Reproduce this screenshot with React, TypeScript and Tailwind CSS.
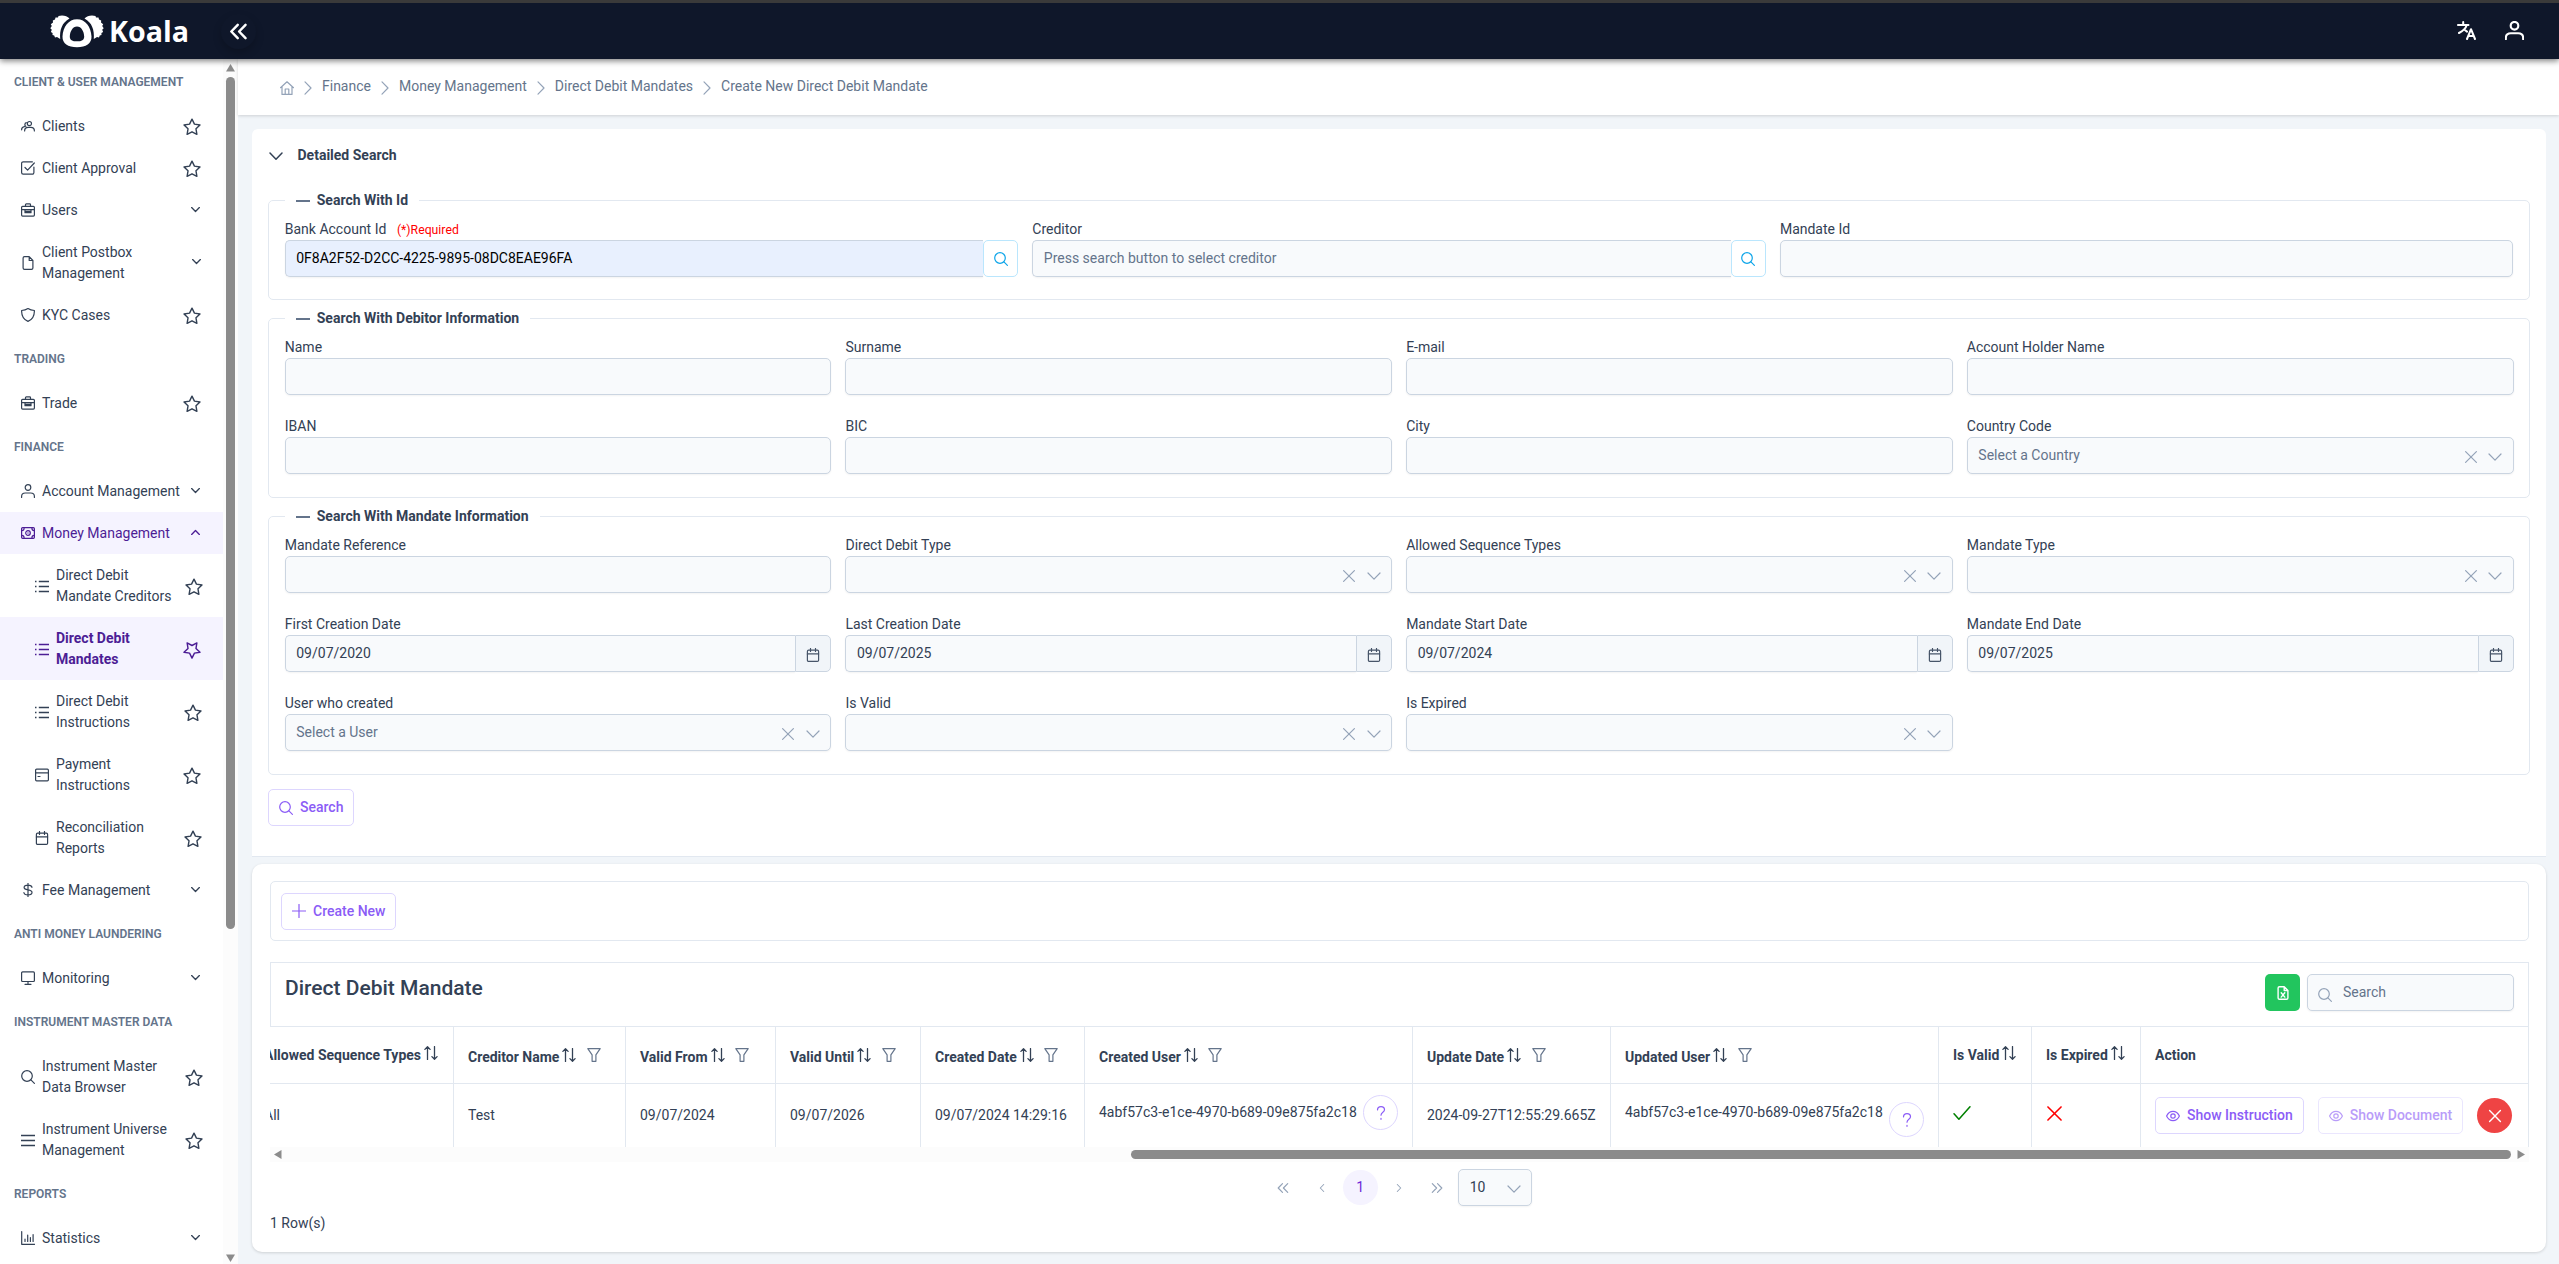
import { ReactNode } from 'react';

const iconPaths: Record<string, ReactNode> = {
  users: (
    <>
      <circle cx="8.4" cy="4.6" r="2.1" />
      <path d="M3.6 12c0-2.6 1.6-3.6 3.6-3.6h2.6c2.200 0 3.600 1 3.600 3.600M4.900 7.300C3.400 7 3.500 4 5.300 3.600M.6 10.800c0-2 1-3 2.800-3.200" />
    </>
  ),
  check: <path d="M12.9 6v5.600a1.600 1.600 0 0 1-1.600 1.600H2.200A1.600 1.600 0 0 1 .6 11.600V2.400A1.600 1.600 0 0 1 2.200.8h9.200M4 6.500l2.600 2.600L13.300 2" />,
  briefcase: (
    <>
      <rect x=".6" y="3.300" width="12.800" height="9.800" rx="1" />
      <path d="M4.500 3.200V1.700c0-.5.3-.8.8-.8h3.400c.5 0 .8.3.8.8v1.500M.6 6.600h12.800M4 7v2.700h6V7M4 8.400h6" />
    </>
  ),
  file: <path d="M8.200.7H3.500c-.8 0-1.400.6-1.400 1.400v9.800c0 .8.6 1.400 1.400 1.400h7c.8 0 1.400-.6 1.400-1.400V4.500L8.200.7zm0 0v3.800h3.700" />,
  shield: <path d="M7 .6c2 1.300 4 1.800 6.400 1.900C13.500 7.500 12 11.400 7 13.400 2 11.400.5 7.500.6 2.500 3 2.400 5 1.900 7 .6z" />,
  user: (
    <>
      <circle cx="7" cy="3.500" r="2.800" />
      <path d="M.6 13.400v-1C.6 10.200 2.300 9 4.300 9h5.400c2 0 3.700 1.200 3.700 3.400v1" />
    </>
  ),
  money: (
    <>
      <rect x=".6" y="1.700" width="12.800" height="10.600" rx="1" />
      <circle cx="7" cy="7" r="2.300" />
      <path d="M.8 4.600c1.500 0 2.300-.8 2.300-2.600M13.200 4.600c-1.500 0-2.300-.8-2.300-2.600M.8 9.400c1.500 0 2.300.8 2.300 2.600M13.200 9.400c-1.500 0-2.300.8-2.300 2.600M7 6.900v.2" />
    </>
  ),
  list: <path d="M3.800 2.500H14M3.800 7.500H14M3.800 12.500H14M0 2.500h1.500M0 7.500h1.500M0 12.500h1.500" strokeLinecap="butt" strokeWidth="1.400" />,
  card: (
    <>
      <rect x=".6" y="1.200" width="12.800" height="11.600" rx="1" />
      <path d="M.6 4.800h12.800M3 8.500h2" />
    </>
  ),
  calendar: (
    <>
      <rect x="1.400" y="2.200" width="11.200" height="11.200" rx="1.200" />
      <path d="M1.400 5.900h11.200M4.500.5v3M9.500.5v3" />
    </>
  ),
  dollar: <path d="M11 4.300C10.700 2.800 9.300 2.100 7 2.100c-2.400 0-3.900.8-3.900 2.400C3.100 8 11 5.900 11 9.500c0 1.600-1.500 2.400-4 2.400-2.400 0-3.900-.8-4.100-2.400M7 .2v13.600" />,
  desktop: (
    <>
      <rect x=".6" y=".9" width="12.800" height="9.600" rx="1" />
      <path d="M7 10.500v2.700M4 13.300h6" />
    </>
  ),
  search: (
    <>
      <circle cx="6" cy="6" r="5.300" />
      <path d="M9.900 9.900l3.500 3.500" />
    </>
  ),
  bars: <path d="M.2 2.500h13.600M.2 7.500h13.600M.2 12.500h13.600" strokeWidth="1.400" />,
  chart: <path d="M.7.6v12.700h12.900M4 10.500V8M6.700 10.500V4M9.400 10.500V6.500M12.100 10.500V3.500" />,
  star: <path d="M7 .9l1.900 3.900 4.300.6-3.100 3 .7 4.300L7 10.700l-3.800 2 .7-4.300-3.100-3 4.300-.6L7 .9z" />,
  starAlt: <path d="M7 13.300l-1.900-3.900-4.300-.6 3.100-3-.7-4.300L7 3.500l3.800-2-.7 4.300 3.100 3-4.300.6L7 13.300z" />,
  down: <path d="M1 4l6 6.200L13 4" />,
  up: <path d="M1 10l6-6.200L13 10" />,
  right: <path d="M4 .9l6 6.100-6 6.100" />,
  left: <path d="M10 .9L4 7l6 6.100" />,
  first: <path d="M6.500 2.600L2.200 7l4.300 4.400M11.700 2.600L7.400 7l4.300 4.400" />,
  last: <path d="M7.500 2.600L11.800 7l-4.300 4.400M2.300 2.600L6.600 7l-4.300 4.400" />,
  times: <path d="M1.600 1.600l10.800 10.800M12.400 1.600L1.600 12.400" />,
  tick: <path d="M.8 7.600l3.800 4.200L13.200 2.200" />,
  home: <path d="M.5 6.700L7 .8l6.500 5.900M2 5.600v7.800h10V5.600M5.200 13.200V8h3.600v5.200" />,
  minus: <path d="M.2 7h13.600" />,
  plus: <path d="M7 .4v13.200M.4 7h13.200" />,
  sort: <path d="M3.500 13.400V.8M.9 3.400L3.500.7l2.600 2.700M10.500.6v12.600M7.900 10.600l2.600 2.700 2.600-2.700" />,
  filter: <path d="M.8.700h12.400L8.900 6.800v6.500H5.100V6.800L.8.700z" />,
  eye: (
    <>
      <path d="M.6 7C2 4 4.300 2.300 7 2.300S12 4 13.400 7C12 10 9.700 11.700 7 11.700S2 10 .6 7z" />
      <circle cx="7" cy="7" r="2.200" />
    </>
  ),
  question: <path d="M3.500 3.900C3.600 1.900 5 .7 7 .7s3.500 1.200 3.500 3.100C10.500 6.300 7 6.300 7 9.200M7 12.300v1" />,
  excel: (
    <>
      <path d="M8.200.7H3.500c-.8 0-1.400.6-1.400 1.400v9.800c0 .8.6 1.400 1.400 1.400h7c.8 0 1.400-.6 1.400-1.400V4.500L8.200.7zm0 0v3.800h3.700" />
      <path d="M5.200 6.700l3.600 4.400M8.800 6.700l-3.600 4.400" />
    </>
  ),
};

type IconProps = { name: string; size?: number; stroke?: number; className?: string };

const Icon = ({ name, size = 14, stroke = 1.2, className = '' }: IconProps) => (
  <svg
    xmlns="http://www.w3.org/2000/svg"
    width={size}
    height={size}
    viewBox="0 0 14 14"
    fill="none"
    stroke="currentColor"
    strokeWidth={stroke}
    strokeLinecap="round"
    strokeLinejoin="round"
    className={`shrink-0 ${className}`}
  >
    {iconPaths[name]}
  </svg>
);

const Logo = () => (
  <svg width="140" height="36" viewBox="0 0 140 36" className="shrink-0 overflow-visible">
    <g fill="#fff">
      <path d="M19.500 5.500C17 2.500 12 1.800 8.500 3L8 4.500 5.500 4.500 5 6.500 2.800 7.500 3 9.500.8 11.200 1.800 13 .3 15.300 1.800 16.800.9 19 2.600 20 2.500 22 4.200 22.600 5 24.500 7 24 10.200 26C9.500 17 12 9.500 19.500 5.500z" />
      <path d="M34.500 5.500C37 2.500 42 1.800 45.500 3L46 4.500 48.500 4.500 49 6.500 51.200 7.500 51 9.500 53.200 11.200 52.200 13 53.700 15.300 52.200 16.800 53.100 19 51.400 20 51.500 22 49.800 22.600 49 24.500 47 24 43.800 26C44.500 17 42 9.500 34.500 5.500z" />
      <path
        fillRule="evenodd"
        d="M27 6.200c8.500 0 14 7.500 14.500 17.300C41.800 30.500 36 34.200 27 34.200s-14.800-3.700-14.500-10.700C13 13.700 18.500 6.200 27 6.200zm0 7.200c-4.400 0-7 5-7.200 10 0 3.600 2.600 4.900 7.200 4.900s7.200-1.300 7.200-4.900c-.2-5-2.800-10-7.200-10z"
      />
    </g>
    <text x="59" y="28.500" fill="#fff" fontFamily="'Open Sans', sans-serif" fontSize="28" fontWeight="700" textLength="80" lengthAdjust="spacingAndGlyphs">
      Koala
    </text>
  </svg>
);

type MenuItem = {
  icon: string;
  lines: string[];
  end: 'star' | 'starAlt' | 'down' | 'up';
  sub?: boolean;
  state?: 'open' | 'active';
  margin?: string;
};

const menu: { title: string; items: MenuItem[] }[] = [
  {
    title: 'CLIENT & USER MANAGEMENT',
    items: [
      { icon: 'users', lines: ['Clients'], end: 'star' },
      { icon: 'check', lines: ['Client Approval'], end: 'star' },
      { icon: 'briefcase', lines: ['Users'], end: 'down' },
      { icon: 'file', lines: ['Client Postbox', 'Management'], end: 'down', margin: 'mr-[22px]' },
      { icon: 'shield', lines: ['KYC Cases'], end: 'star' },
    ],
  },
  { title: 'TRADING', items: [{ icon: 'briefcase', lines: ['Trade'], end: 'star' }] },
  {
    title: 'FINANCE',
    items: [
      { icon: 'user', lines: ['Account Management'], end: 'down' },
      { icon: 'money', lines: ['Money Management'], end: 'up', state: 'open' },
      { icon: 'list', lines: ['Direct Debit', 'Mandate Creditors'], end: 'star', sub: true, margin: 'mr-[20px]' },
      { icon: 'list', lines: ['Direct Debit', 'Mandates'], end: 'starAlt', sub: true, state: 'active' },
      { icon: 'list', lines: ['Direct Debit', 'Instructions'], end: 'star', sub: true, margin: 'mr-[21px]' },
      { icon: 'card', lines: ['Payment', 'Instructions'], end: 'star', sub: true },
      { icon: 'calendar', lines: ['Reconciliation', 'Reports'], end: 'star', sub: true, margin: 'mr-[21px]' },
      { icon: 'dollar', lines: ['Fee Management'], end: 'down' },
    ],
  },
  { title: 'ANTI MONEY LAUNDERING', items: [{ icon: 'desktop', lines: ['Monitoring'], end: 'down' }] },
  {
    title: 'INSTRUMENT MASTER DATA',
    items: [
      { icon: 'search', lines: ['Instrument Master', 'Data Browser'], end: 'star', margin: 'mr-[20px]' },
      { icon: 'bars', lines: ['Instrument Universe', 'Management'], end: 'star', margin: 'mr-[20px]' },
    ],
  },
  { title: 'REPORTS', items: [{ icon: 'chart', lines: ['Statistics'], end: 'down' }] },
];

const SidebarItem = ({ icon, lines, end, sub, state, margin }: MenuItem) => {
  const isStar = end === 'star' || end === 'starAlt';
  const endMargin = margin ?? (isStar ? 'mr-[22px]' : 'mr-[23px]');
  return (
    <div
      className={`flex items-center gap-[7px] py-[10.5px] ${sub ? 'pl-[35px]' : 'pl-[21px]'} ${
        state ? 'bg-[#f5f3ff] text-[#4c1d95]' : 'text-[#334155]'
      }`}
    >
      <Icon name={icon} />
      <span className={state === 'active' ? 'font-bold' : ''}>
        {lines.map((line) => (
          <span key={line} className="block whitespace-nowrap">
            {line}
          </span>
        ))}
      </span>
      <Icon
        name={end}
        size={isStar ? 18 : 9}
        stroke={isStar ? 1.1 : 2}
        className={`relative ml-auto ${isStar ? 'top-px' : '-top-px'} ${endMargin}`}
      />
    </div>
  );
};

const Sidebar = () => (
  <aside className="flex w-[238px] shrink-0 overflow-hidden bg-white">
    <div className="w-[223px] shrink-0">
      {menu.map((group) => (
        <div key={group.title}>
          <div className="flex h-[46px] items-center pl-[14px] text-[12px] font-semibold whitespace-nowrap text-[#64748b]">
            {group.title}
          </div>
          {group.items.map((item) => (
            <SidebarItem key={item.lines.join(' ')} {...item} />
          ))}
        </div>
      ))}
    </div>
    <div className="flex h-[1205px] w-[15px] flex-col items-center bg-[#fcfcfc] pt-[5px] pb-[2px]">
      <svg width="9" height="8" viewBox="0 0 9 8" fill="#8b8b8b">
        <path d="M4.500 0L9 7.500H0z" />
      </svg>
      <div className="mt-[5px] h-[852px] w-[9px] rounded-full bg-[#8b8b8b]" />
      <svg width="9" height="8" viewBox="0 0 9 8" fill="#8b8b8b" className="mt-auto">
        <path d="M4.500 8L9 .5H0z" />
      </svg>
    </div>
  </aside>
);

const Breadcrumb = () => {
  const items = ['Finance', 'Money Management', 'Direct Debit Mandates', 'Create New Direct Debit Mandate'];
  return (
    <div className="flex h-[56px] items-center bg-white pb-px pl-[42px] text-[#64748b] shadow-[0_1px_3px_rgba(0,0,0,0.15)]">
      <Icon name="home" className="relative top-px text-[#94a3b8]" />
      {items.map((item) => (
        <div key={item} className="flex items-center">
          <Icon name="right" className="relative top-px mx-[7px] text-[#94a3b8]" />
          <span>{item}</span>
        </div>
      ))}
    </div>
  );
};

type FieldProps = {
  label: string;
  kind?: 'text' | 'select' | 'date' | 'lookup';
  value?: string;
  placeholder?: string;
  required?: boolean;
  autofill?: boolean;
};

const Field = ({ label, kind = 'text', value, placeholder, required, autofill }: FieldProps) => {
  const joined = kind === 'date' || kind === 'lookup';
  return (
    <div className="min-w-0">
      <div className="flex h-[21px] items-center">
        {label}
        {required && <span className="ml-[10.500px] pt-px text-[12.250px] text-[#ff0000]">(*)Required</span>}
      </div>
      <div className="flex h-[37px]">
        <div
          className={`flex min-w-0 flex-1 items-center border border-[#cbd5e1] px-[10.5px] shadow-[0_1px_2px_rgba(18,18,23,0.05)] ${
            joined ? 'rounded-l-[5px] border-r-0' : 'rounded-[5px]'
          } ${autofill ? 'bg-[#e8f0fe] text-black' : 'bg-[#f8fafc]'}`}
        >
          {value && <span>{value}</span>}
          {placeholder && <span className="text-[#64748b]">{placeholder}</span>}
          {kind === 'select' && (
            <div className="ml-auto flex gap-[10.500px] pt-[2px] text-[#94a3b8]">
              <Icon name="times" />
              <Icon name="down" />
            </div>
          )}
        </div>
        {kind === 'date' && (
          <div className="flex w-[36px] items-center justify-center rounded-r-[5px] border border-[#cbd5e1] bg-[#f1f5f9] pt-[2px] text-[#475569]">
            <Icon name="calendar" />
          </div>
        )}
        {kind === 'lookup' && (
          <div className="flex w-[35px] items-center justify-center rounded-[5px] border border-[#bae6fd] text-[#0ea5e9]">
            <Icon name="search" />
          </div>
        )}
      </div>
    </div>
  );
};

const Fieldset = ({ title, wide, className, children }: { title: string; wide?: boolean; className: string; children: ReactNode }) => (
  <fieldset className={`mx-[-0.5px] min-w-0 rounded-[5px] border border-[#e2e8f0] pr-[15.500px] pl-[15.750px] ${className}`}>
    <legend className="flex h-[21px] items-center px-[11px] font-bold">
      <Icon name="minus" stroke={2} className="mr-[7px] text-[#64748b]" />
      {title}
    </legend>
    <div className={`grid gap-x-[14px] gap-y-[21px] pt-[8px] ${wide ? 'grid-cols-4' : 'grid-cols-3'}`}>{children}</div>
  </fieldset>
);

const OutlineButton = ({ icon, label, className = '' }: { icon: string; label: string; className?: string }) => (
  <button className={`flex h-[37px] items-center gap-[7px] rounded-[5px] border border-[#ddd6fe] px-[10px] font-medium whitespace-nowrap text-[#8b5cf6] ${className}`}>
    <Icon name={icon} />
    {label}
  </button>
);

const SearchPanel = () => (
  <section className="h-[728px] rounded-t-[6px] border-b border-[#e2e8f0] bg-white px-[16.500px] pt-[16px]">
    <div className="flex h-[21px] items-center font-bold">
      <Icon name="down" stroke={1.500} className="mr-[15px]" />
      Detailed Search
    </div>
    <Fieldset title="Search With Id" className="mt-[24px] h-[110px]">
      <Field label="Bank Account Id" kind="lookup" value="0F8A2F52-D2CC-4225-9895-08DC8EAE96FA" required autofill />
      <Field label="Creditor" kind="lookup" placeholder="Press search button to select creditor" />
      <Field label="Mandate Id" />
    </Fieldset>
    <Fieldset title="Search With Debitor Information" wide className="mt-[8px] h-[190px]">
      <Field label="Name" />
      <Field label="Surname" />
      <Field label="E-mail" />
      <Field label="Account Holder Name" />
      <Field label="IBAN" />
      <Field label="BIC" />
      <Field label="City" />
      <Field label="Country Code" kind="select" placeholder="Select a Country" />
    </Fieldset>
    <Fieldset title="Search With Mandate Information" wide className="mt-[8px] h-[269px]">
      <Field label="Mandate Reference" />
      <Field label="Direct Debit Type" kind="select" />
      <Field label="Allowed Sequence Types" kind="select" />
      <Field label="Mandate Type" kind="select" />
      <Field label="First Creation Date" kind="date" value="09/07/2020" />
      <Field label="Last Creation Date" kind="date" value="09/07/2025" />
      <Field label="Mandate Start Date" kind="date" value="09/07/2024" />
      <Field label="Mandate End Date" kind="date" value="09/07/2025" />
      <Field label="User who created" kind="select" placeholder="Select a User" />
      <Field label="Is Valid" kind="select" />
      <Field label="Is Expired" kind="select" />
    </Fieldset>
    <OutlineButton icon="search" label="Search" className="mt-[14px] -ml-[0.500px]" />
  </section>
);

const HelpButton = ({ className = '' }: { className?: string }) => (
  <span className={`flex size-[35px] shrink-0 items-center justify-center rounded-full border border-[#ddd6fe] text-[#8b5cf6] ${className}`}>
    <Icon name="question" />
  </span>
);

const userId = '4abf57c3-e1ce-4970-b689-09e875fa2c18';

const columns: { title: string; width: string; sort?: boolean; filter?: boolean; cell: ReactNode }[] = [
  { title: 'Allowed Sequence Types', width: 'w-[204px]', sort: true, cell: 'All' },
  { title: 'Creditor Name', width: 'w-[172px]', sort: true, filter: true, cell: 'Test' },
  { title: 'Valid From', width: 'w-[150px]', sort: true, filter: true, cell: '09/07/2024' },
  { title: 'Valid Until', width: 'w-[145px]', sort: true, filter: true, cell: '09/07/2026' },
  { title: 'Created Date', width: 'w-[164px]', sort: true, filter: true, cell: '09/07/2024 14:29:16' },
  {
    title: 'Created User',
    width: 'w-[328px]',
    sort: true,
    filter: true,
    cell: (
      <div className="flex items-center gap-[6.500px] pb-[6px]">
        {userId}
        <HelpButton />
      </div>
    ),
  },
  { title: 'Update Date', width: 'w-[198px]', sort: true, filter: true, cell: '2024-09-27T12:55:29.665Z' },
  {
    title: 'Updated User',
    width: 'w-[328px]',
    sort: true,
    filter: true,
    cell: (
      <div className="flex items-center gap-[6.500px] pb-[6px]">
        {userId}
        <HelpButton className="relative top-[7px]" />
      </div>
    ),
  },
  { title: 'Is Valid', width: 'w-[93px]', sort: true, cell: <Icon name="tick" size={18} className="mb-[5px] text-[#008000]" /> },
  { title: 'Is Expired', width: 'w-[109px]', sort: true, cell: <Icon name="times" size={17} className="mb-[5px] text-[#ff0000]" stroke={1.300} /> },
  {
    title: 'Action',
    width: 'w-[388px]',
    cell: (
      <div className="flex items-center gap-[14px]">
        <OutlineButton icon="eye" label="Show Instruction" />
        <OutlineButton icon="eye" label="Show Document" className="opacity-60" />
        <span className="flex size-[35px] items-center justify-center rounded-full bg-[#ef4444] text-white">
          <Icon name="times" stroke={1.400} />
        </span>
      </div>
    ),
  },
];

const MandateTable = () => (
  <div className="mt-[21px]">
    <div className="flex h-[65px] items-start border border-[#e2e8f0] px-[14px] pt-[11px]">
      <h2 className="text-[21px] leading-[28px] font-medium">Direct Debit Mandate</h2>
      <button className="mr-[7px] ml-auto flex h-[37px] w-[35px] items-center justify-center rounded-[5px] bg-[#22c55e] text-white">
        <Icon name="excel" stroke={1.400} />
      </button>
      <div className="flex h-[37px] w-[207px] items-center gap-[11px] rounded-[5px] border border-[#cbd5e1] bg-[#f8fafc] px-[10px] text-[#64748b] shadow-[0_1px_2px_rgba(18,18,23,0.05)]">
        <Icon name="search" className="relative top-[2px] text-[#94a3b8]" />
        <span>Search</span>
      </div>
    </div>
    <div className="flex justify-end overflow-hidden">
      {columns.map((column) => (
        <div key={column.title} className={`shrink-0 border-r border-[#e2e8f0] whitespace-nowrap ${column.width}`}>
          <div className="flex h-[57px] items-center border-b border-[#e2e8f0] pl-[14px] font-bold">
            <span className={column.filter ? 'pt-[5px]' : ''}>{column.title}</span>
            {column.sort && <Icon name="sort" stroke={1.300} className={column.filter ? 'ml-[3px]' : 'relative -top-[2px] ml-[3px]'} />}
            {column.filter && <Icon name="filter" className="ml-[10.500px] text-[#64748b]" />}
          </div>
          <div className="flex h-[63px] items-center pl-[14px]">{column.cell}</div>
        </div>
      ))}
    </div>
    <div className="flex h-[15px] items-center bg-[#fcfcfc] pr-[4px] pl-[4px]">
      <svg width="8" height="9" viewBox="0 0 8 9" fill="#8b8b8b">
        <path d="M0 4.500L7.500 0v9z" />
      </svg>
      <div className="ml-auto h-[9px] w-[1380px] rounded-full bg-[#8b8b8b]" />
      <svg width="8" height="9" viewBox="0 0 8 9" fill="#8b8b8b" className="ml-[6px]">
        <path d="M8 4.500L.5 0v9z" />
      </svg>
    </div>
  </div>
);

const Paginator = () => (
  <div className="mt-[7px] flex h-[37px] items-center justify-center gap-[3.500px] pr-px text-[#94a3b8]">
    <span className="flex size-[35px] items-center justify-center">
      <Icon name="first" />
    </span>
    <span className="flex size-[35px] items-center justify-center">
      <Icon name="left" size={8} stroke={1.800} />
    </span>
    <span className="flex size-[35px] items-center justify-center rounded-full bg-[#f5f3ff] text-[#6d28d9]">1</span>
    <span className="flex size-[35px] items-center justify-center">
      <Icon name="right" size={8} stroke={1.800} />
    </span>
    <span className="flex size-[35px] items-center justify-center">
      <Icon name="last" />
    </span>
    <div className="flex h-[37px] w-[74px] items-center justify-between rounded-[5px] border border-[#cbd5e1] bg-[#f8fafc] px-[10.500px] shadow-[0_1px_2px_rgba(18,18,23,0.05)]">
      <span className="text-[#334155]">10</span>
      <Icon name="down" className="relative top-px" />
    </div>
  </div>
);

export default function App() {
  return (
    <div className="flex h-[1264px] w-[2559px] flex-col overflow-hidden bg-[#f1f5f9] font-[Roboto,sans-serif] text-[14px] leading-[21px] text-[#334155]">
      <header className="relative z-10 flex h-[59px] shrink-0 items-center border-t-3 border-[#3a3a3a] bg-[#0f172a] pl-[50px] text-white shadow-[0_2px_6px_rgba(0,0,0,0.5)]">
        <Logo />
        <div className="ml-[31px] flex size-[35px] items-center justify-center rounded-full shadow-[0_4px_8px_rgba(0,0,0,0.2)]">
          <Icon name="first" size={21} stroke={1.650} />
        </div>
        <div className="ml-auto flex items-center gap-[29px] pr-[35px] pb-px">
          <svg width="19" height="19" viewBox="0 0 19 19" fill="none" stroke="currentColor" strokeWidth="2" strokeLinecap="round" strokeLinejoin="round">
            <path d="M.9 4h10.600M6.200 1v3M9.800 4c-1 3.500-4 6-7.800 8M7.500 8.800l2.500 1.800M10 18l4-9.800L18 18M11.400 15h5.200" />
          </svg>
          <Icon name="user" size={19} stroke={1.600} />
        </div>
      </header>
      <div className="flex min-h-0 flex-1">
        <Sidebar />
        <main className="min-w-0 flex-1">
          <Breadcrumb />
          <div className="pt-[14px] pr-[13px] pl-[14px]">
            <SearchPanel />
            <section className="mt-[7px] h-[388px] rounded-[10px] bg-white pt-[17px] pr-[17px] pl-[18px] shadow-[0_1px_3px_rgba(0,0,0,0.15)]">
              <div className="flex h-[60px] items-center rounded-[5px] border border-[#e2e8f0] px-[10px]">
                <OutlineButton icon="plus" label="Create New" />
              </div>
              <MandateTable />
              <Paginator />
              <div className="mt-[7px]">1 Row(s)</div>
            </section>
          </div>
        </main>
      </div>
    </div>
  );
}
